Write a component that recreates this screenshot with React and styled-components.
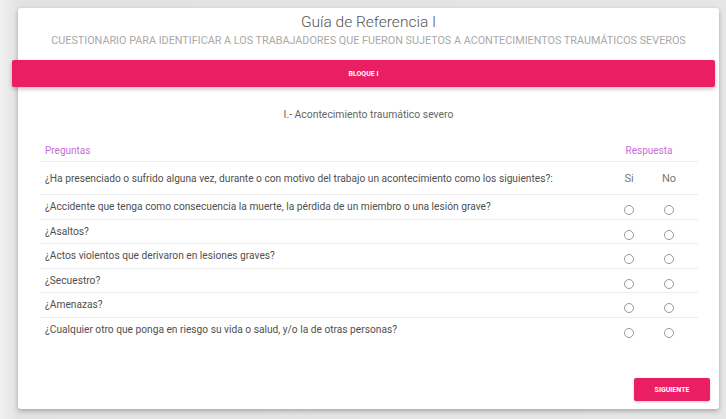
import React from 'react';
import styled, { createGlobalStyle } from 'styled-components';

const GlobalStyle = createGlobalStyle`
  html, body {
    margin: 0;
    padding: 0;
    background: #e6e6e6;
    font-family: Roboto, "Noto Sans", sans-serif;
  }
`;

const Page = styled.div`
  width: 726px;
  height: 419px;
  padding: 8px 7px 0 18px;
  box-sizing: border-box;
  background: linear-gradient(to right, #f1f1f1 0px, #e2e2e2 18px, #e6e6e6 100%);
`;

const Card = styled.div`
  height: 401px;
  background: #fff;
  border-radius: 3px;
  box-shadow: 0 2px 5px rgba(0, 0, 0, 0.28);
  display: flex;
  flex-direction: column;
`;

const Title = styled.h1`
  margin: 5px 0 0;
  font-size: 15.5px;
  line-height: 18px;
  font-weight: 300;
  color: #555;
  text-align: center;
`;

const Subtitle = styled.h2`
  margin: 3px 0 0;
  font-size: 10.8px;
  line-height: 14px;
  font-weight: 400;
  color: #a9a9a9;
  text-align: center;
  text-transform: uppercase;
`;

const Banner = styled.div`
  margin: 12px 4px 0 -6px;
  height: 27px;
  background: #e91e63;
  border-radius: 2px;
  box-shadow: 0 2px 4px rgba(0, 0, 0, 0.25);
  color: #fff;
  font-size: 7px;
  font-weight: 700;
  display: flex;
  align-items: center;
  justify-content: center;
`;

const Section = styled.div`
  margin-top: 21px;
  font-size: 10.4px;
  line-height: 14px;
  color: #666;
  text-align: center;
`;

const Table = styled.div`
  margin: 18px 21px 0 22px;
  display: flex;
  flex-direction: column;
`;

const Row = styled.div`
  display: flex;
  align-items: center;
  height: ${(p) => p.h}px;
  border-bottom: ${(p) => (p.last ? 'none' : '1px solid #ececec')};
  box-sizing: border-box;
`;

const Question = styled.div`
  flex: 1;
  padding-left: 5px;
  font-size: ${(p) => (p.head ? 10 : 10.2)}px;
  color: ${(p) => (p.head ? '#c46fd4' : '#4f4f4f')};
`;

const Answer = styled.div`
  width: 80px;
  margin-right: 9px;
  display: flex;
  justify-content: center;
  font-size: 10px;
  color: #c46fd4;
  margin-top: ${(p) => p.shift || 0}px;
`;

const Cell = styled.div`
  width: 40px;
  display: flex;
  justify-content: center;
  font-size: 11px;
  color: #777;
`;

const Radio = styled.span`
  width: 8px;
  height: 8px;
  border: 1px solid #9a9a9a;
  border-radius: 50%;
`;

const Footer = styled.div`
  margin-top: auto;
  display: flex;
  justify-content: flex-end;
  padding: 0 9px 8px 0;
`;

const Button = styled.button`
  width: 76px;
  height: 23px;
  border: none;
  border-radius: 2px;
  background: #e91e63;
  color: #fff;
  font-family: Roboto, sans-serif;
  font-size: 7px;
  font-weight: 700;
  box-shadow: 0 1px 3px rgba(0, 0, 0, 0.2);
`;

const questions = [
  '¿Accidente que tenga como consecuencia la muerte, la pérdida de un miembro o una lesión grave?',
  '¿Asaltos?',
  '¿Actos violentos que derivaron en lesiones graves?',
  '¿Secuestro?',
  '¿Amenazas?',
  '¿Cualquier otro que ponga en riesgo su vida o salud, y/o la de otras personas?',
];

export default function App() {
  return (
    <Page>
      <GlobalStyle />
      <Card>
        <Title>Guía de Referencia I</Title>
        <Subtitle>Cuestionario para identificar a los trabajadores que fueron sujetos a acontecimientos traumáticos severos</Subtitle>
        <Banner>BLOQUE I</Banner>
        <Section>I.- Acontecimiento traumático severo</Section>
        <Table>
          <Row h={22}>
            <Question head>Preguntas</Question>
            <Answer>Respuesta</Answer>
          </Row>
          <Row h={33}>
            <Question>¿Ha presenciado o sufrido alguna vez, durante o con motivo del trabajo un acontecimiento como los siguientes?:</Question>
            <Answer>
              <Cell>Si</Cell>
              <Cell>No</Cell>
            </Answer>
          </Row>
          {questions.map((q, i) => (
            <Row key={q} h={24.5} last={i === questions.length - 1}>
              <Question>{q}</Question>
              <Answer shift={7}>
                <Cell><Radio /></Cell>
                <Cell><Radio /></Cell>
              </Answer>
            </Row>
          ))}
        </Table>
        <Footer>
          <Button>SIGUIENTE</Button>
        </Footer>
      </Card>
    </Page>
  );
}
